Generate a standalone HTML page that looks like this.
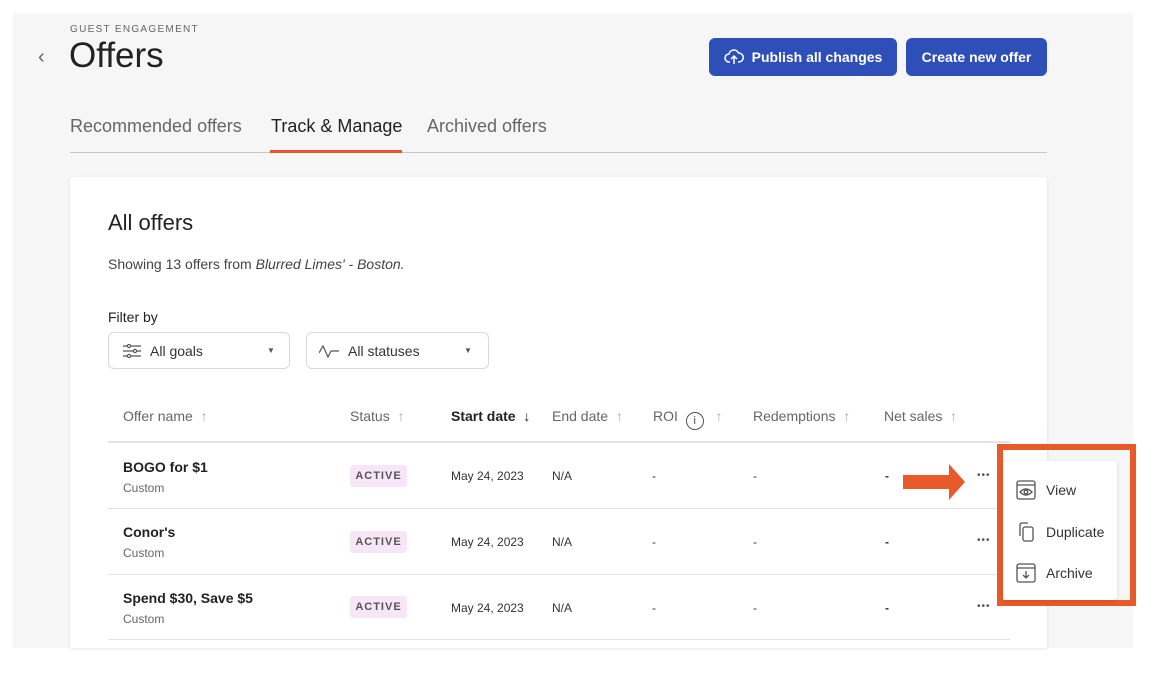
<!DOCTYPE html>
<html><head><meta charset="utf-8"><style>
*{box-sizing:border-box;margin:0;padding:0}
body{width:1156px;height:674px;background:#fff;font-family:"Liberation Sans",sans-serif;position:relative;overflow:hidden;color:#222}
.gray{position:absolute;left:13px;top:13px;width:1120px;height:635px;background:#f6f6f6;overflow:hidden}
.a{position:absolute;white-space:nowrap}
.btn{position:absolute;top:38px;height:38px;background:#2f4fb8;color:#fff;border-radius:6px;font-size:14px;font-weight:bold;display:flex;align-items:center;justify-content:center;gap:8px}
.card{position:absolute;left:70px;top:177px;width:977px;height:471px;background:#fff;border-radius:4px 4px 0 0;box-shadow:0 1px 3px rgba(0,0,0,.1)}
.sel{position:absolute;top:332px;height:37px;border:1px solid #d8d8d8;border-radius:6px;background:#fff;font-size:14px;color:#333}
.th{position:absolute;top:408px;font-size:14px;color:#666}
.hr{position:absolute;left:108px;width:902px;height:1px;background:#e3e3e3}
.name{position:absolute;left:123px;font-size:14px;font-weight:bold;color:#222}
.sub{position:absolute;left:123px;font-size:12px;color:#666}
.badge{position:absolute;left:350px;width:57px;height:22px;background:#f6e6f8;border-radius:3px;font-size:11px;font-weight:bold;letter-spacing:1px;color:#555;display:flex;align-items:center;justify-content:center}
.cell{position:absolute;font-size:12px;color:#333}
.dots{position:absolute;left:977px;font-size:10px;color:#555;letter-spacing:1px}
.mi{position:absolute;left:1016px;font-size:14px;color:#333;display:flex;align-items:center;gap:10px}
</style></head><body>
<div class="gray"></div>
<div class="a" style="left:70px;top:24px;font-size:10px;letter-spacing:1.3px;color:#666">GUEST ENGAGEMENT</div>
<div class="a" style="left:38px;top:46px;font-size:20px;color:#666">&#8249;</div>
<div class="a" style="left:69px;top:36px;font-size:35px;color:#222">Offers</div>
<div class="btn" style="left:709px;width:188px"><svg width="20" height="18" viewBox="0 0 20 18" fill="none" stroke="#fff" stroke-width="1.5"><path d="M6 14H5a4 4 0 0 1 0-8 5 5 0 0 1 9.5-1A4 4 0 0 1 15 14h-1"/><path d="M10 16V8M7 11l3-3 3 3"/></svg>Publish all changes</div>
<div class="btn" style="left:906px;width:141px">Create new offer</div>
<div class="a" style="left:70px;top:116px;font-size:18px;color:#666">Recommended offers</div>
<div class="a" style="left:271px;top:116px;font-size:18px;color:#222">Track &amp; Manage</div>
<div class="a" style="left:427px;top:116px;font-size:18px;color:#666">Archived offers</div>
<div class="a" style="left:70px;top:152px;width:977px;height:1px;background:#c8c8c8"></div>
<div class="a" style="left:270px;top:150px;width:132px;height:3px;background:#e8552a"></div>
<div class="card"></div>
<div class="a" style="left:108px;top:210px;font-size:22px;color:#222">All offers</div>
<div class="a" style="left:108px;top:256px;font-size:14px;color:#444">Showing 13 offers from <i>Blurred Limes' - Boston.</i></div>
<div class="a" style="left:108px;top:309px;font-size:14px;color:#222">Filter by</div>
<div class="sel" style="left:108px;width:182px"><svg style="position:absolute;left:14px;top:11px" width="18" height="14" viewBox="0 0 18 14" fill="none" stroke="#555" stroke-width="1.2"><path d="M0 2h18M0 7h18M0 12h18"/><circle cx="6" cy="2" r="1.6" fill="#fff"/><circle cx="12" cy="7" r="1.6" fill="#fff"/><circle cx="6" cy="12" r="1.6" fill="#fff"/></svg><span class="a" style="left:41px;top:10px">All goals</span><span class="a" style="left:158px;top:13px;font-size:8px;color:#555">&#9660;</span></div>
<div class="sel" style="left:306px;width:183px"><svg style="position:absolute;left:12px;top:11px" width="20" height="14" viewBox="0 0 20 14" fill="none" stroke="#555" stroke-width="1.2"><path d="M0 9l4-7 5 11 3-6h8"/></svg><span class="a" style="left:41px;top:10px">All statuses</span><span class="a" style="left:157px;top:13px;font-size:8px;color:#555">&#9660;</span></div>
<div class="th" style="left:123px">Offer name &nbsp;<span style="color:#aaa">↑</span></div>
<div class="th" style="left:350px">Status &nbsp;<span style="color:#aaa">↑</span></div>
<div class="th" style="left:451px;color:#222;font-weight:bold">Start date &nbsp;<span style="font-weight:normal">↓</span></div>
<div class="th" style="left:552px">End date &nbsp;<span style="color:#aaa">↑</span></div>
<div class="th" style="left:653px">ROI <span style="display:inline-block;width:18px;height:18px;border:1.3px solid #555;border-radius:50%;font-size:11px;text-align:center;line-height:16px;color:#444;vertical-align:-3px;margin-left:4px">i</span> &nbsp;&nbsp;<span style="color:#aaa">↑</span></div>
<div class="th" style="left:753px">Redemptions &nbsp;<span style="color:#aaa">↑</span></div>
<div class="th" style="left:884px">Net sales &nbsp;<span style="color:#aaa">↑</span></div>
<div class="hr" style="top:441px;height:2px"></div>
<div class="name" style="top:459px">BOGO for $1</div><div class="sub" style="top:481px">Custom</div>
<div class="badge" style="top:465px">ACTIVE</div>
<div class="cell" style="left:451px;top:469px">May 24, 2023</div><div class="cell" style="left:552px;top:469px">N/A</div><div class="cell" style="left:652px;top:469px">-</div><div class="cell" style="left:753px;top:469px">-</div><div class="cell" style="left:885px;top:469px;font-weight:bold">-</div><div class="dots" style="top:470px">•••</div>
<div class="hr" style="top:508px"></div>
<div class="name" style="top:524px">Conor's</div><div class="sub" style="top:546px">Custom</div>
<div class="badge" style="top:531px">ACTIVE</div>
<div class="cell" style="left:451px;top:535px">May 24, 2023</div><div class="cell" style="left:552px;top:535px">N/A</div><div class="cell" style="left:652px;top:535px">-</div><div class="cell" style="left:753px;top:535px">-</div><div class="cell" style="left:885px;top:535px;font-weight:bold">-</div><div class="dots" style="top:535px">•••</div>
<div class="hr" style="top:574px"></div>
<div class="name" style="top:590px">Spend $30, Save $5</div><div class="sub" style="top:612px">Custom</div>
<div class="badge" style="top:596px">ACTIVE</div>
<div class="cell" style="left:451px;top:601px">May 24, 2023</div><div class="cell" style="left:552px;top:601px">N/A</div><div class="cell" style="left:652px;top:601px">-</div><div class="cell" style="left:753px;top:601px">-</div><div class="cell" style="left:885px;top:601px;font-weight:bold">-</div><div class="dots" style="top:601px">•••</div>
<div class="hr" style="top:639px"></div>
<svg class="a" style="left:903px;top:464px" width="62" height="36" viewBox="0 0 62 36"><path d="M0 11h46V0l16 18-16 18V25H0z" fill="#e95a2a"/></svg>
<div class="a" style="left:997px;top:444px;width:139px;height:162px;border:6px solid #e95a2a"></div>
<div class="a" style="left:1003px;top:461px;width:114px;height:139px;background:#fff;border-radius:4px;box-shadow:0 1px 4px rgba(0,0,0,.12)"></div>
<div class="mi" style="top:480px"><svg width="20" height="20" viewBox="0 0 20 20" fill="none" stroke="#555" stroke-width="1.3"><rect x="1" y="1" width="18" height="18" rx="2"/><path d="M1 5h18"/><path d="M4 12q6-6 12 0q-6 6-12 0z"/><circle cx="10" cy="12" r="1.8"/></svg>View</div>
<div class="mi" style="top:522px"><svg width="20" height="20" viewBox="0 0 20 20" fill="none" stroke="#555" stroke-width="1.3"><path d="M4 14V3q0-2 2-2h6"/><rect x="7" y="5" width="10" height="14" rx="2"/></svg>Duplicate</div>
<div class="mi" style="top:563px"><svg width="20" height="20" viewBox="0 0 20 20" fill="none" stroke="#555" stroke-width="1.3"><rect x="1" y="1" width="18" height="18" rx="2"/><path d="M1 5h18M10 8v7M7 12l3 3 3-3"/></svg>Archive</div>
</body></html>
